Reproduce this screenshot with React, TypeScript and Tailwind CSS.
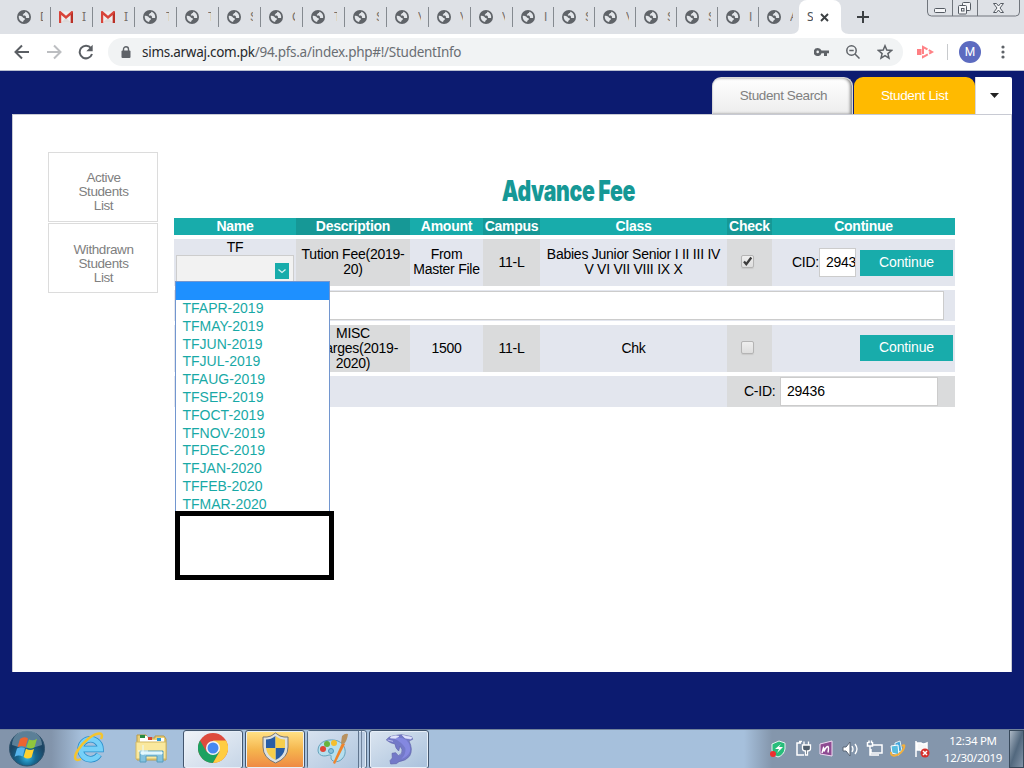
import React from 'react';

const tabs: { icon: 'globe' | 'mail'; text: string; width: string }[] = [
  { icon: 'globe', text: 'D', width: 'w-[42px]' },
  { icon: 'mail', text: 'I', width: 'w-[42px]' },
  { icon: 'mail', text: 'I', width: 'w-[42px]' },
  { icon: 'globe', text: 'T', width: 'w-[42px]' },
  { icon: 'globe', text: 'T', width: 'w-[42px]' },
  { icon: 'globe', text: 'S', width: 'w-[42px]' },
  { icon: 'globe', text: 'C', width: 'w-[42px]' },
  { icon: 'globe', text: 'T', width: 'w-[42px]' },
  { icon: 'globe', text: 'S', width: 'w-[42px]' },
  { icon: 'globe', text: 'V', width: 'w-[42px]' },
  { icon: 'globe', text: 'V', width: 'w-[42px]' },
  { icon: 'globe', text: 'V', width: 'w-[42px]' },
  { icon: 'globe', text: 'I', width: 'w-[41px]' },
  { icon: 'globe', text: 'S', width: 'w-[41px]' },
  { icon: 'globe', text: 'V', width: 'w-[41px]' },
  { icon: 'globe', text: 'S', width: 'w-[41px]' },
  { icon: 'globe', text: 'S', width: 'w-[41px]' },
  { icon: 'globe', text: 'I', width: 'w-[41px]' },
  { icon: 'globe', text: 'A', width: 'w-[41px]' },
];

const months = [
  'TFAPR-2019', 'TFMAY-2019', 'TFJUN-2019', 'TFJUL-2019', 'TFAUG-2019', 'TFSEP-2019',
  'TFOCT-2019', 'TFNOV-2019', 'TFDEC-2019', 'TFJAN-2020', 'TFFEB-2020', 'TFMAR-2020',
];

function Globe() {
  return (
    <svg width="14" height="14" viewBox="0 0 14 14" className="shrink-0">
      <circle cx="7" cy="7" r="7" fill="#5f6368" />
      <path d="M1.700 6C3 5.600 4.200 6 5 6.500c.7.400.8 1.300 1.700 1.400 1 .1 1.500.6 1.200 1.400-.3.700-1 .7-1.300 1.300-.2.500-.2 1-.7 1.500C3.200 11.500 1.500 9.300 1.700 6z" fill="#e3e6ea" />
      <path d="M8 1.700c.5.700.1 1.300-.5 1.400-.8.200-.6.900-1.200 1.100-.6.200-.7.900 0 1.200.8.300 1.700 0 2.300.7.600.8 0 1.300.6 1.800.800.5 1.900-.1 2.900.2C12.700 5 11 2.200 8 1.700z" fill="#e3e6ea" />
    </svg>
  );
}

function Mail() {
  return (
    <svg width="14" height="12" viewBox="0 0 14 12" className="shrink-0">
      <rect x="0.500" y="0.500" width="13" height="11" fill="#eeeeee" />
      <path d="M2 11.500 7 7l5 4.500z" fill="#dcdcdc" />
      <path d="M0 1v11h2.200V4L7 8l4.800-4v8H14V1c0-1-1.200-1.200-2-.6L7 4.800 2 .4C1.200-.2 0 0 0 1z" fill="#d8443a" />
      <path d="M11.800 4v8H14V1z" fill="#b93027" />
    </svg>
  );
}

function TabStrip() {
  return (
    <div className="flex h-[34px] bg-[#dee1e6] pl-[9px]">
      {tabs.map((t, i) => (
        <div key={i} className={`flex h-[34px] shrink-0 items-center pl-2 ${t.width}`}>
          <div className="flex h-[34px] w-[14px] items-center"><div>{t.icon === 'globe' ? <Globe /> : <Mail />}</div></div>
          <div className={`ml-[9px] overflow-hidden text-xs leading-[16px] text-[#77706b] ${t.icon === 'mail' ? "w-[5px] font-['Noto_Sans',sans-serif]" : 'w-[3px]'}`}>{t.text}</div>
          {i < 18 && <div className="ml-auto h-5 w-px bg-[#858a90]" />}
        </div>
      ))}
      <div className="relative ml-[-1px] flex h-[34px] w-[42px] items-center rounded-t-[8px] bg-white pl-2">
        <svg className="absolute bottom-0 left-[-8px]" width="58" height="8"><path d="M0 8Q8 8 8 0V8zM58 8Q50 8 50 0V8z" fill="#fff" /></svg>
        <div className="w-[6px] overflow-hidden font-['Noto_Sans',sans-serif] text-xs text-[#4c5056]">S</div>
        <svg className="ml-[7px]" width="9" height="9" viewBox="0 0 9 9"><path d="M1 1l7 7M8 1 1 8" stroke="#3c4043" strokeWidth="1.900" /></svg>
      </div>
      <svg className="ml-4 mt-[11px]" width="12" height="12"><path d="M6 0v12M0 6h12" stroke="#3c4043" strokeWidth="2" /></svg>
      <svg className="ml-[58px]" width="93" height="18" viewBox="0 0 93 18" fill="none">
        <path d="M.5 0v12q0 4 4 4h84q4 0 4-4V0M25.500 0v16M50.500 0v16" stroke="#70757c" />
        <rect x="7.500" y="8.500" width="11" height="4" rx="1" stroke="#555b63" fill="#f5f6f8" />
        <rect x="35.500" y="2.500" width="8" height="8" rx="1" stroke="#555b63" fill="#f5f6f8" />
        <rect x="31.500" y="5.500" width="8" height="8.500" rx="1" stroke="#555b63" fill="#f5f6f8" />
        <rect x="34.500" y="8.500" width="2.500" height="2.500" stroke="#555b63" />
        <path d="M66.500 3.500h3l2 2.500 2-2.500h3L73 8l3.500 4.500h-3l-2-2.500-2 2.500h-3L70 8z" stroke="#555b63" fill="#f5f6f8" />
      </svg>
    </div>
  );
}

function Toolbar() {
  return (
    <div className="flex h-[37px] items-center border-b border-[#b9bfd0] bg-white pl-[14px]">
      <svg width="16" height="16" viewBox="0 0 16 16" fill="none" stroke="#5a5e63" strokeWidth="2"><path d="M15 8H2.500M8 1.500 1.500 8 8 14.500" /></svg>
      <svg className="ml-4" width="16" height="16" viewBox="0 0 16 16" fill="none" stroke="#bcbec1" strokeWidth="2"><path d="M1 8h12.500M8 1.500 14.500 8 8 14.500" /></svg>
      <svg className="ml-4" width="16" height="16" viewBox="0 0 16 16"><path d="M13 4.200A6.300 6.300 0 1 0 14 10" fill="none" stroke="#5a5e63" strokeWidth="2" /><path d="M14.700.8v6.400H8.300z" fill="#5a5e63" /></svg>
      <div className="ml-[14px] flex h-7 w-[795px] items-center rounded-full bg-[#f1f3f4] pl-[13px]">
        <svg width="10" height="13" viewBox="0 0 10 13"><path d="M2.500 5V3.200a2.500 2.500 0 0 1 5 0V5" fill="none" stroke="#5f6368" strokeWidth="1.400" /><rect x="0.500" y="4.500" width="9" height="7.500" rx="1" fill="#5f6368" /></svg>
        <div className="ml-[11px] w-[330px] whitespace-nowrap font-['Noto_Sans',sans-serif] text-[13.500px] tracking-[-0.28px] text-[#6a6e73]"><span className="text-[#26282b]">sims.arwaj.com.pk</span>/94.pfs.a/index.php#!/StudentInfo</div>
        <svg className="ml-[342px]" width="15" height="8" viewBox="0 0 15 8"><path fillRule="evenodd" d="M3.700 0A4 4 0 1 0 7.500 5.200H10V8h3V5.200h2V2.600H7.500A4 4 0 0 0 3.700 0zm0 2.600a1.300 1.300 0 1 1 0 2.600 1.300 1.300 0 0 1 0-2.600z" fill="#5f6368" /></svg>
        <svg className="ml-[17px]" width="14" height="14" viewBox="0 0 14 14" fill="none" stroke="#5f6368" strokeWidth="1.500"><circle cx="5.500" cy="5.500" r="4.700" /><path d="m9 9 4.500 4.500M3.300 5.500h4.400" /></svg>
        <svg className="ml-[17px]" width="16" height="16" viewBox="0 0 16 16" fill="none" stroke="#5f6368" strokeWidth="1.500"><path d="m8 1.800 1.800 4.300 4.700.4-3.600 3.100 1.100 4.600L8 11.700l-4 2.500 1.100-4.600-3.600-3.100 4.700-.4z" /></svg>
      </div>
      <svg className="ml-[14px]" width="17" height="14" viewBox="0 0 17 14"><rect x="0" y="4" width="4.500" height="6" fill="#ff7f83" /><path d="M6 2v10L15 7z" fill="none" stroke="#ff8286" strokeWidth="2" strokeDasharray="7 1.500" /></svg>
      <div className="ml-[13px] h-4 w-px bg-[#c8cacd]" />
      <div className="ml-[11px] flex h-[22px] w-[22px] items-center justify-center rounded-full bg-[#5c6bc0] font-['Roboto',sans-serif] text-[12px] text-white">M</div>
      <svg className="ml-5" width="4" height="14"><g fill="#5f6368"><circle cx="2" cy="2" r="1.600" /><circle cx="2" cy="7" r="1.600" /><circle cx="2" cy="12" r="1.600" /></g></svg>
    </div>
  );
}

function SideItem({ name, pad }: { name: string; pad: string }) {
  return (
    <div className={`h-[70px] w-[110px] border border-[#dcdcdc] pl-px text-center text-[13.500px] leading-[14px] tracking-[-0.420px] text-[#808080] ${pad}`}>
      {name}<br />Students<br />List
    </div>
  );
}

const cols = 'grid grid-cols-[122px_114px_73px_57px_187px_45px_183px]';
const dark = 'bg-[#dadbdc] flex items-center justify-center';
const light = 'flex items-center justify-center';

function Check({ on }: { on?: boolean }) {
  return (
    <div className="mr-[4px] mb-[2px] h-[13px] w-[13px] rounded-[2px] border border-[#b4b4b4] bg-linear-to-b from-[#eeeeee] to-[#dedede] shadow-[0_1px_1px_#c9c9c9]">
      {on && <svg width="11" height="11" viewBox="0 0 11 11" fill="none" stroke="#3c3c3c" strokeWidth="2.300"><path d="m2 5.500 2.300 2.700L9.300 1.500" /></svg>}
    </div>
  );
}

function Continue() {
  return <div className="flex h-[26px] w-[93px] items-center justify-center bg-[#18acab] pb-px text-[14px] tracking-[-0.150px] text-white">Continue</div>;
}

function FeeTable() {
  return (
    <div className="mt-[11px] flex w-[781px] flex-col gap-1 text-center text-[14px] leading-[15px] tracking-[-0.250px] text-black">
      <div className={`${cols} h-[17px] bg-[#18acab] text-[14px] leading-[17px] font-bold text-white`}>
        <div>Name</div>
        <div className="bg-[#169896]">Description</div>
        <div>Amount</div>
        <div className="bg-[#169896]">Campus</div>
        <div>Class</div>
        <div className="bg-[#169896]">Check</div>
        <div>Continue</div>
      </div>
      <div className={`${cols} h-[47px] bg-[#e3e6ee]`}>
        <div className="relative pt-[1px]">
          <div>TF</div>
          <div className="ml-[2px] flex h-[31px] w-[118px] items-end justify-end border border-[#cdcdcd] bg-[#f2f2f2] pr-1 pb-[6px]">
            <div className="flex h-4 w-[14px] items-center justify-center bg-[#18acab]">
              <svg width="8" height="5" fill="none" stroke="#d9f2f1" strokeWidth="1.300"><path d="m.5.5 3.500 3 3.500-3" /></svg>
            </div>
          </div>
          <div className="absolute top-[42px] left-[1px] z-10 flex w-[159px] flex-col tracking-normal">
            <div className="h-[230px] w-[155px] border border-b-0 border-[#7296cf] bg-white">
              <div className="h-[18px] bg-[#1e90ff]" />
              {months.map((m) => <div key={m} className="h-[17.800px] pl-[6.500px] text-left text-[14px] leading-[17.800px] text-[#18a9a6]">{m}</div>)}
            </div>
            <div className="h-[69px] w-[159px] border-[5px] border-black bg-white" />
          </div>
        </div>
        <div className={`${dark} pb-px`}><div>Tution Fee(2019-<br />20)</div></div>
        <div className={`${light} pb-px`}><div>From<br />Master File</div></div>
        <div className={dark}>11-L</div>
        <div className={`${light} pb-px`}><div>Babies Junior Senior I II III IV<br />V VI VII VIII IX X</div></div>
        <div className={dark}><Check on /></div>
        <div className="flex items-center justify-end pr-[2px]">
          <div>CID:</div>
          <div className="h-[29px] w-[37px] overflow-hidden border border-[#cccccc] bg-white pl-[6px] text-left leading-[27px]">29436</div>
          <div className="w-1" />
          <Continue />
        </div>
      </div>
      <div className="h-[31px] bg-[#e3e6ee] pt-px pl-[3px]"><div className="h-[29px] w-[767px] border border-[#cccccc] bg-white" /></div>
      <div className={`${cols} h-[47px] bg-[#e3e6ee]`}>
        <div />
        <div className={`${dark} pb-px`}><div>MISC<br />Charges(2019-<br />2020)</div></div>
        <div className={light}>1500</div>
        <div className={dark}>11-L</div>
        <div className={light}>Chk</div>
        <div className={dark}><Check /></div>
        <div className="flex items-center justify-end pr-[2px] pb-px"><Continue /></div>
      </div>
      <div className="flex h-[31px] bg-[#e3e6ee]">
        <div className="w-[553px]" />
        <div className="flex w-[228px] items-center bg-[#dadbdc] pl-[17px]">
          <div className="w-[36px] text-left">C-ID:</div>
          <div className="h-[29px] w-[158px] border border-[#cccccc] bg-white pl-[6px] text-left leading-[27px]">29436</div>
        </div>
      </div>
    </div>
  );
}

function Page() {
  return (
    <div className="flex h-[658px] flex-col bg-[#0c1b70] px-3 pt-[6px]">
      <div className="flex h-[37px] justify-end">
        <div className="flex w-[141px] items-center justify-center rounded-t-[9px] border border-b-0 border-[#d8d8d8] bg-linear-to-b from-white to-[#ededed] pl-[2px] text-[13.500px] tracking-[-0.400px] text-[#808080] shadow-[inset_-2px_0_3px_#888]">Student Search</div>
        <div className="z-10 ml-px flex w-[121px] items-center justify-center rounded-t-[9px] bg-[#ffba00] text-[13.500px] leading-[35px] tracking-[-0.350px] text-white"><span className="pb-px">Student List</span></div>
        <div className="flex w-[37px] items-center justify-center rounded-tr-[2px] border-l border-[#d8d8dc] bg-white">
          <svg width="9" height="5"><path d="M0 0h9L4.500 5z" fill="#222" /></svg>
        </div>
      </div>
      <div className="z-10 flex h-[558px] w-[1000px] border border-b-0 border-[#c8cad3] bg-white pt-[37px] pl-[35px]">
        <div className="flex w-[110px] flex-col gap-px"><SideItem name="Active" pad="pt-[18px]" /><SideItem name="Withdrawn" pad="pt-[19px]" /></div>
        <div className="ml-4 w-[781px] pt-[22px]">
          <div className="flex h-[33px] w-full items-center justify-center pl-[7px]">
            <div className="origin-center scale-x-[0.745] font-['Inter',sans-serif] text-[28.500px] leading-[33px] font-black tracking-[-0.500px] whitespace-nowrap text-[#169896]">Advance Fee</div>
          </div>
          <FeeTable />
        </div>
      </div>
    </div>
  );
}

const taskButton = 'flex h-[39px] w-[60px] shrink-0 items-center justify-center rounded-[3px] border border-[#43566e] pb-[3px] shadow-[inset_0_0_0_1px_#e7eff8]';

function StartOrb() {
  return (
    <svg className="ml-[9px]" width="36" height="38" viewBox="0 0 36 38">
      <defs><radialGradient id="orb" cx="50%" cy="75%"><stop offset="0" stopColor="#35b9e9" /><stop offset=".5" stopColor="#17678f" /><stop offset="1" stopColor="#1c4564" /></radialGradient></defs>
      <circle cx="18" cy="18.500" r="17.500" fill="url(#orb)" stroke="#31536d" />
      <path d="M3 15A15 15 0 0 1 33 15Q18 21 3 15z" fill="#a9c5d5" opacity=".45" />
      <path d="M11 9q4-3 8-.5l-2.500 8.500q-4-2-8 .3z" fill="#ed6430" />
      <path d="M20 9.500q4 2 8-.8l-2.500 8.500q-4 2.600-8-.3z" fill="#90c63d" />
      <path d="M8 18.500q4-2.300 8-.2l-2.400 8.300q-4-2.500-8 .2z" fill="#56b4ec" />
      <path d="M17 18.700q4 2.500 8 .2l-2.400 8.300q-4 2.600-8-.3z" fill="#ffd22f" />
    </svg>
  );
}

function Explorer() {
  return (
    <svg width="34" height="32" viewBox="0 0 34 32">
      <path d="M2 7V3h9l2 3h7V4h9l2 3v21H2z" fill="#ead17a" stroke="#b99b4a" />
      <path d="M5 4h7l2 4h8l1-2h6v4H5z" fill="#fff" />
      <path d="M5 3h5v3H5z" fill="#278b42" /><path d="M13 5h4v3h-4z" fill="#d64534" /><path d="M22 6h4v3h-4z" fill="#2a9bd5" />
      <path d="M1 10h30v17H1z" fill="#fae89d" stroke="#d3b964" />
      <path d="M5 30V19h23v11h-6v-6H11v6z" fill="#83c2df" stroke="#579cbc" />
      <path d="M6 20h21v2H6zM8 13v10M3 19h10" fill="#d9f3fb" stroke="#e9fbff" />
    </svg>
  );
}

function Taskbar() {
  return (
    <div className="flex h-[39px] border-t border-[#71829b] bg-linear-to-r from-[#8294ab] from-[5%] via-[#a6c0dc] via-[8%] to-[#a6c0dc] font-['Noto_Sans',sans-serif]">
      <StartOrb />
      <svg className="ml-7" width="34" height="36" viewBox="0 0 34 36" fill="none">
        <path d="M26 24.500A10 10 0 1 1 27.500 19H10" stroke="#2b8ecb" strokeWidth="6.500" />
        <path d="M26 24.500A10 10 0 1 1 27.500 19H10" stroke="#76d0f8" strokeWidth="5" />
        <path d="M8 29C2 32 0 28 5 20 11 11 20 4 26 3.500c3.500-.3 3.500 2.500 2 5.500" stroke="#f4c42d" strokeWidth="2.500" />
      </svg>
      <div className="ml-7 pt-[2px]"><Explorer /></div>
      <div className={`${taskButton} ml-[14px] bg-linear-to-br from-[#f0f4f8] to-[#c6d5e7]`}>
        <svg width="30" height="30" viewBox="0 0 30 30">
          <circle cx="15" cy="15" r="15" fill="#dd4b3e" />
          <path d="M2 7.500A15 15 0 0 0 15 30l6.500-11.200L8.500 18.800z" fill="#1ca261" />
          <path d="M15 30A15 15 0 0 0 28 7.500H15l6.500 11.300z" fill="#ffcd42" />
          <circle cx="15" cy="15" r="7" fill="#f4f4f4" /><circle cx="15" cy="15" r="5.500" fill="#4688f1" />
        </svg>
      </div>
      <div className={`${taskButton} ml-[2px] bg-linear-to-b from-[#ffe386] via-[#f5b64e] to-[#ee8744]`}>
        <svg width="27" height="32" viewBox="0 0 27 32">
          <path d="M13.500 1 18 4q4 1.500 8 1v10q0 11-12.500 16Q1 26 1 15V5q4 .5 8-1z" fill="#dde1e1" stroke="#777" />
          <path d="M13.500 4v12H4V7.500q5 0 9.500-3.500M13.500 16H23q-1 8-9.500 12z" fill="#285da5" />
          <path d="M13.500 4q4.500 3.500 9.500 3.500V16h-9.500zM4 16h9.500v12Q5 24 4 16z" fill="#f6ce4c" />
        </svg>
      </div>
      <div className="ml-[2px] flex h-[39px] w-[60px] shrink-0 rounded-[3px] border border-[#536982] bg-[#b9cce2] shadow-[inset_0_0_0_1px_#e3edf7]">
        <div className="flex w-[51px] items-center justify-end border-r border-[#60758e] bg-linear-to-br from-[#d7e2ef] to-[#b1c7df] pr-[9px] pb-[3px]">
          <svg width="33" height="33" viewBox="0 0 33 33">
            <path d="M2 18C2 9 14 6 22 9c7 3 10 12 4 18-5 5-11 2-11-1 0-2 1-3-2-3-5 2-11 1-11-5z" fill="#b6dfee" stroke="#65a3bc" />
            <circle cx="7" cy="17" r="3" fill="#e04638" /><circle cx="11" cy="12" r="3" fill="#68b33d" /><circle cx="18" cy="11" r="3" fill="#f5bf2d" /><circle cx="15" cy="19" r="2.500" fill="#8ac1db" stroke="#4c99bd" />
            <path d="m17 31 9-20 3 1-10 20z" fill="#ef842c" /><path d="m25 11 1-7q3-3 6-2-1 7-4 10z" fill="#b89260" />
          </svg>
        </div>
        <div className="ml-[2px] w-px bg-[#71859e]" />
      </div>
      <div className={`${taskButton} ml-[2px] bg-linear-to-br from-[#dbe5f0] to-[#a9c1dc]`}>
        <svg className="mt-[3px]" width="40" height="36" viewBox="0 0 120 108">
          <path d="M22 24Q28 13 44 11L68 8 98 14 101 22 90 27Q103 52 92 72 82 86 60 89L52 95 35 96 33 86 40 78 39 64 50 62 58 71Q72 65 69 53L63 42 59 57Q49 49 48 36 34 34 22 24z" fill="#7379c8" stroke="#6265ac" strokeWidth="2" />
          <path d="M46 20Q65 13 82 24 96 39 93 58 86 76 67 81 82 66 79 48 68 30 46 20z" fill="#8488e0" />
          <path d="M36 14Q50 9 60 13L50 19 34 18zM70 10 99 16 96 21 78 18zM26 24 42 28" fill="#dfe3fc" stroke="#dfe3fc" strokeWidth="2" />
        </svg>
      </div>
      <div className="ml-auto flex w-[280px] shrink-0 items-center bg-linear-to-r from-[#a6c0dc] to-[#8496ac] to-[10%] pl-[26px]">
        <svg width="161" height="18" viewBox="0 0 161 18">
          <path d="m2 4 7-3 6 2v6q-1 6-7 8-6-2-6-7z" fill="#27bd7b" stroke="#e4f5ef" /><path d="m11 4-6 5h4l-2 4 6-6H9z" fill="#fff" /><circle cx="3" cy="14" r="3" fill="#ee3030" />
          <path d="M31 3h-4v12h7M29 1.500h3" fill="none" stroke="#fff" strokeWidth="1.500" />
          <path d="M32.500 5v3.500q0 2.500 3 2.500v4h2v-4q3 0 3-2.500V5zM34 1.500V5M38.500 1.500V5" fill="#51606e" stroke="#fff" strokeWidth="1.300" />
          <path d="m50 4 12-3v15l-12-2z" fill="#8e4b92" stroke="#f3dbf4" /><path d="m52 13 1.500-5.500q1 1 .5 4 2-5 4-5 1 1 0 6" fill="none" stroke="#fff" strokeWidth="1.400" />
          <path d="M73 7h3l4-5v14l-4-5h-3z" fill="#fff" stroke="#596575" /><path d="M82 6q2 3 0 6M85 4q4 5 0 10" fill="none" stroke="#fff" strokeWidth="1.300" />
          <path d="M103 5h9v8h-11V9M97.500 2v4h5V2M100 6v9h9M99 .5V3M101.500.5V3" fill="none" stroke="#fff" strokeWidth="1.500" />
          <path d="m125 3 5-2 2 10-7 1z" fill="#44a6dc" stroke="#ddeef5" /><path d="m121 6 7-1 1 10-7-2z" fill="#57bce0" stroke="#fff" /><path d="M121 12c-1 6 8 4 12-2 2-4 2-6-1-4" fill="none" stroke="#f3b03c" strokeWidth="2" />
          <path d="M146 1v16M147 3h4q2 2 6 0v7q-5 2-7 0h-3z" fill="#f7f7f7" stroke="#fff" strokeWidth="1.500" /><circle cx="155" cy="13" r="4.500" fill="#d5302c" /><path d="m153 11 4 4m0-4-4 4" stroke="#fff" strokeWidth="1.500" />
        </svg>
        <div className="ml-[12px] w-[60px] pb-px text-center text-[11.500px] leading-[17px] tracking-[-0.300px] whitespace-nowrap text-white">12:34 PM<br />12/30/2019</div>
        <div className="ml-auto h-full w-[15px] border border-[#38495b] bg-linear-to-br from-[#acb8c5] via-[#52687e] to-[#8394a8]" />
      </div>
    </div>
  );
}

export default function App() {
  return (
    <div className="flex h-[768px] w-[1024px] flex-col overflow-hidden bg-white font-['Liberation_Sans',Arial,sans-serif]">
      <TabStrip />
      <Toolbar />
      <Page />
      <Taskbar />
    </div>
  );
}
